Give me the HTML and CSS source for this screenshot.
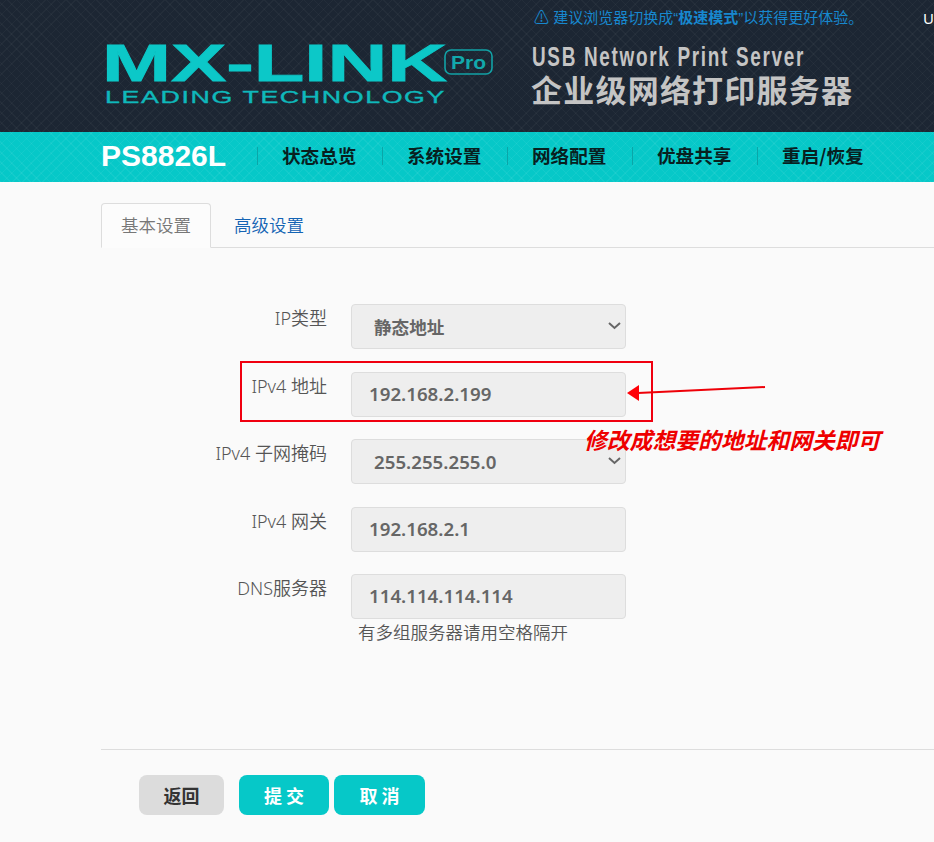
FILE: index.html
```html
<!DOCTYPE html>
<html lang="zh-CN">
<head>
  <meta charset="UTF-8" />
  <title>PS8826L</title>
  <link rel="stylesheet" href="styles.css">
</head>
<body>
  <header>
    <div class="top-bar">
      <div class="notice">⚠ 建议浏览器切换成“<b>极速模式</b>”以获得更好体验。</div>
      <div class="user">U</div>
    </div>
    <svg class="brand" width="934" height="106" viewBox="0 0 934 106">
      <text class="logo-main" x="102" y="55" textLength="345" lengthAdjust="spacingAndGlyphs">MX-LINK</text>
      <text class="logo-sub" x="105" y="76.5" textLength="341" lengthAdjust="spacingAndGlyphs">LEADING TECHNOLOGY</text>
      <rect class="logo-badge" x="445" y="24" width="47" height="24" rx="6"></rect>
      <text class="logo-pro" x="451" y="43" textLength="35" lengthAdjust="spacingAndGlyphs">Pro</text>
      <text class="slogan-en" x="532" y="40" textLength="273" lengthAdjust="spacingAndGlyphs">USB Network Print Server</text>
      <text class="slogan-cn" x="531" y="76" textLength="321">企业级网络打印服务器</text>
    </svg>
  </header>

  <nav>
    <div class="model">PS8826L</div>
    <ul>
      <li><a href="#">状态总览</a></li>
      <li><a href="#">系统设置</a></li>
      <li><a href="#">网络配置</a></li>
      <li><a href="#">优盘共享</a></li>
      <li><a href="#">重启/恢复</a></li>
    </ul>
  </nav>

  <main>
    <div class="tabs">
      <a class="tab active" href="#">基本设置</a>
      <a class="tab second" href="#">高级设置</a>
    </div>

    <form class="form">
      <label>IP类型</label>
      <div class="select-wrap">
        <select class="select-cn"><option>静态地址</option></select>
        <svg class="chevron" width="13" height="8" viewBox="0 0 13 8"><path d="M1 1 L6.5 6 L12 1" fill="none" stroke="#666" stroke-width="2"></path></svg>
      </div>

      <label>IPv4 地址</label>
      <input type="text" value="192.168.2.199">

      <label>IPv4 子网掩码</label>
      <div class="select-wrap">
        <select><option>255.255.255.0</option></select>
        <svg class="chevron" width="13" height="8" viewBox="0 0 13 8"><path d="M1 1 L6.5 6 L12 1" fill="none" stroke="#666" stroke-width="2"></path></svg>
      </div>

      <label>IPv4 网关</label>
      <input type="text" value="192.168.2.1">

      <label>DNS服务器</label>
      <div>
        <input type="text" value="114.114.114.114">
        <div class="hint">有多组服务器请用空格隔开</div>
      </div>
    </form>

    <div class="actions">
      <button class="btn-back" type="button">返回</button>
      <button class="btn-main" type="button">提 交</button>
      <button class="btn-main btn-wide" type="button">取 消</button>
    </div>
  </main>

  <!-- 标注 -->
  <div class="mark-box"></div>
  <svg class="mark-arrow" width="150" height="30" viewBox="0 0 150 30">
    <line x1="139" y1="5" x2="12" y2="11" stroke="#ee0008" stroke-width="2"></line>
    <polygon points="1,11 13,3 13,19" fill="#ff0008"></polygon>
  </svg>
  <div class="mark-text">修改成想要的地址和网关即可</div>
</body>
</html>
```

FILE: styles.css
```css
html, body {
  margin: 0;
  padding: 0;
}

body {
  width: 934px;
  height: 842px;
  overflow: hidden;
  position: relative;
  background-color: #fafafa;
  font-family: "Noto Sans", "Open Sans", "Noto Sans CJK SC", sans-serif;
  color: #555;
}

header {
  height: 132px;
  background-color: #1c2633;
  background-image:
    repeating-linear-gradient(45deg, rgba(255, 255, 255, 0.03) 0 1px, transparent 1px 7px),
    repeating-linear-gradient(-45deg, rgba(255, 255, 255, 0.03) 0 1px, transparent 1px 7px);
}

.top-bar {
  display: flex;
  height: 21px;
  padding: 5px 0 0 534px;
  line-height: 26px;
  font-size: 15px;
}

.notice {
  width: 392px;
  color: #1788cf;
  font-family: "Liberation Sans", "Noto Sans CJK SC", sans-serif;
  white-space: nowrap;
}

.user {
  color: #fff;
}

.brand {
  display: block;
}

.logo-main {
  font-family: "Liberation Sans", sans-serif;
  font-weight: bold;
  font-size: 52px;
  fill: #0cc8c8;
  stroke: #0cc8c8;
  stroke-width: 0.8;
}

.logo-sub {
  font-family: "Liberation Sans", sans-serif;
  font-size: 16.5px;
  letter-spacing: 1px;
  fill: #0fb8bb;
  stroke: #0fb8bb;
  stroke-width: 0.35;
}

.logo-badge {
  fill: none;
  stroke: #12a2a6;
  stroke-width: 1.6;
}

.logo-pro {
  font-family: "Liberation Sans", sans-serif;
  font-weight: bold;
  font-size: 19px;
  fill: #12a9ac;
}

.slogan-en {
  font-family: "Liberation Sans", sans-serif;
  font-weight: bold;
  font-size: 28px;
  letter-spacing: 2.5px;
  fill: #c4c4c4;
}

.slogan-cn {
  font-family: "Noto Sans CJK SC", sans-serif;
  font-weight: bold;
  font-size: 31px;
  fill: #c4c4c4;
}

nav {
  display: flex;
  align-items: center;
  box-sizing: border-box;
  height: 50px;
  padding: 0 0 2px 101px;
  background-color: #06c8c8;
  background-image:
    repeating-linear-gradient(45deg, rgba(255, 255, 255, 0.05) 0 1px, transparent 1px 7px),
    repeating-linear-gradient(-45deg, rgba(255, 255, 255, 0.05) 0 1px, transparent 1px 7px);
}

.model {
  width: 156px;
  color: #fff;
  font-family: "Liberation Sans", sans-serif;
  font-weight: bold;
  font-size: 30px;
}

nav ul {
  display: flex;
  list-style: none;
  margin: 0;
  padding: 0;
}

nav li {
  width: 100px;
  height: 18px;
  padding-left: 24px;
  border-left: 1px solid #0aa6a8;
}

nav li a {
  display: block;
  color: #08201f;
  text-decoration: none;
  font-family: "Noto Sans CJK SC", sans-serif;
  font-weight: 700;
  font-size: 18.6px;
  line-height: 16px;
  white-space: nowrap;
}

.tabs {
  display: flex;
  height: 44px;
  margin: 21px 0 0 101px;
  border-bottom: 1px solid #ddd;
}

.tab {
  width: 110px;
  height: 44px;
  line-height: 42px;
  text-align: center;
  color: #1464b4;
  text-decoration: none;
  font-family: "Noto Sans CJK SC", sans-serif;
  font-size: 17.5px;
  font-weight: 350;
  box-sizing: border-box;
  border: 1px solid transparent;
}

.tab.second {
  margin-left: 3px;
}

.tab.active {
  height: 45px;
  color: #777;
  background: #fcfcfc;
  border-color: #ddd;
  border-bottom-color: #fcfcfc;
  border-radius: 4px 4px 0 0;
}

.form {
  display: grid;
  grid-template-columns: 226px 275px;
  column-gap: 24px;
  row-gap: 22.5px;
  margin: 56px 0 0 101px;
}

.form label {
  text-align: right;
  font-size: 18px;
  line-height: 28px;
  color: #555;
  font-weight: 350;
}

.form input,
.form select {
  display: block;
  box-sizing: border-box;
  width: 275px;
  height: 45px;
  margin: 0;
  background-color: #eee;
  border: 1px solid #ddd;
  border-radius: 4px;
  color: #666;
  font-family: "Noto Sans", "Noto Sans CJK SC", sans-serif;
  font-size: 18.7px;
  font-weight: 600;
  outline: none;
}

.form input {
  padding: 0 17px 2px;
}

.form select {
  appearance: none;
  padding: 0 22px;
}

.form .select-cn {
  font-size: 17.6px;
}

.select-wrap {
  position: relative;
}

.chevron {
  position: absolute;
  right: 5.5px;
  top: 18px;
}

.hint {
  margin: 1px 0 0 7px;
  height: 24px;
  line-height: 24px;
  font-size: 17.5px;
  font-weight: 350;
  color: #555;
  white-space: nowrap;
}

.actions {
  display: flex;
  margin: 105px 0 0 101px;
  padding: 25px 0 0 38px;
  border-top: 1px solid #ddd;
}

.actions button {
  height: 40px;
  border: none;
  border-radius: 8px;
  font-family: "Noto Sans CJK SC", sans-serif;
  font-size: 18px;
  font-weight: bold;
  cursor: pointer;
}

.btn-back {
  width: 85px;
  margin-right: 15px;
  background-color: #dcdcdc;
  color: #333;
}

.btn-main {
  width: 90px;
  margin-right: 5px;
  background-color: #06c8c8;
  color: #fff;
}

.actions .btn-wide {
  width: 91px;
}

.mark-box {
  position: absolute;
  left: 240px;
  top: 361px;
  width: 409px;
  height: 57px;
  border: 2px solid #f00010;
}

.mark-arrow {
  position: absolute;
  left: 626px;
  top: 382px;
}

.mark-text {
  position: absolute;
  left: 584px;
  top: 422px;
  color: #ee0000;
  font-family: "Noto Sans CJK SC", sans-serif;
  font-style: italic;
  font-weight: bold;
  font-size: 22.8px;
  line-height: 36px;
  white-space: nowrap;
}
```
